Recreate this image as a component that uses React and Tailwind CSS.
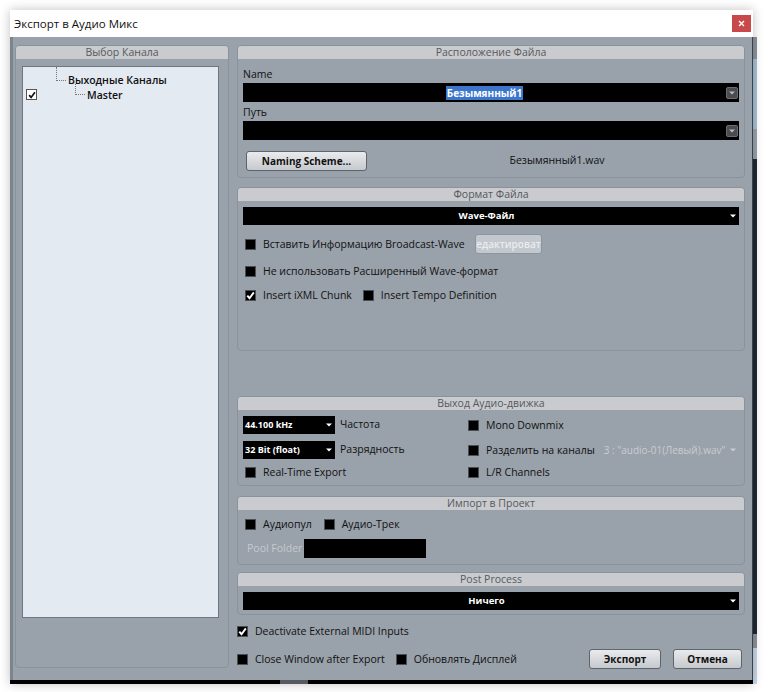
import React from "react";

function Check({ checked }) {
  return (
    <div className="w-[11px] h-[11px] bg-black border border-[#4a4f55] flex items-center justify-center shrink-0">
      {checked && (
        <svg width="9" height="9" viewBox="0 0 9 9">
          <path d="M1.3 4.6 L3.5 7.2 L7.8 1.4" stroke="white" strokeWidth="1.9" fill="none" />
        </svg>
      )}
    </div>
  );
}

function Row({ checked, children, className = "" }) {
  return (
    <div className={`flex items-center h-[16px] gap-[7px] shrink-0 ${className}`}>
      <Check checked={checked} />
      <span className="text-[10.5px] leading-[16px] text-[#111] whitespace-nowrap">{children}</span>
    </div>
  );
}

function Panel({ title, className = "", children }) {
  return (
    <div className={`rounded-[4px] border border-[#8a929b] bg-[#99a1aa] flex flex-col ${className}`}>
      <div className="h-[13px] bg-[#c9cbce] rounded-t-[3px] text-[10.5px] leading-[13px] text-center text-[#555a60] shrink-0">
        {title}
      </div>
      {children}
    </div>
  );
}

function Arrow({ color = "#ffffff" }) {
  return (
    <svg width="6" height="4" viewBox="0 0 6 4">
      <path d="M0 0.5 L6 0.5 L3 3.5 Z" fill={color} />
    </svg>
  );
}

function DropBox() {
  return (
    <div className="w-[12px] h-[12px] bg-[#4a4c50] rounded-[2px] border border-[#6a6d72] flex items-center justify-center">
      <Arrow color="#b8bcc2" />
    </div>
  );
}

function Btn({ children, className = "" }) {
  return (
    <div
      className={`h-[20px] rounded-[3px] border border-[#5e646b] bg-gradient-to-b from-[#e9ebed] to-[#c6c9cd] flex items-center justify-center text-[10px] font-bold text-[#111] shrink-0 ${className}`}
    >
      {children}
    </div>
  );
}

export default function App() {
  return (
    <div className="w-[768px] h-[692px] bg-white relative overflow-hidden font-['Open_Sans','Noto_Sans',sans-serif]">
      {/* background window glimpse */}
      <div className="absolute left-[753px] top-[37px] w-[4px] h-[647px] bg-[#1f2a38] flex flex-col">
        <div className="h-[22px] bg-[#8c949d]" />
        <div className="h-[70px] bg-[#a8c1d8]" />
        <div className="h-[30px] bg-[#9aa3ad]" />
        <div className="flex-1" />
        <div className="h-[14px] bg-[#8c949d]" />
        <div className="h-[36px] bg-[#c8d8e8]" />
      </div>

      <div className="absolute left-[10px] top-[10px] w-[743px] shadow-[0_0_10px_rgba(0,0,0,0.25)]">
        {/* title bar */}
        <div className="h-[27px] bg-white flex items-center pl-[4px] pr-[2px]">
          <span className="text-[11.5px] text-[#111]">Экспорт в Аудио Микс</span>
          <div className="ml-auto w-[19px] h-[17px] bg-[#c9484a] flex items-center justify-center">
            <svg width="7" height="7" viewBox="0 0 7 7">
              <path d="M1 1 L6 6 M6 1 L1 6" stroke="white" strokeWidth="1.4" />
            </svg>
          </div>
        </div>

        {/* body */}
        <div className="h-[643px] bg-[#99a1aa] border-l-[3px] border-l-[#7c848e] border-r border-r-[#3a4048] flex pl-[2px]">
          {/* left panel */}
          <Panel title="Выбор Канала" className="mt-[8px] w-[214px] h-[623px] shrink-0">
            <div className="mt-[7px] ml-[6px] w-[197px] h-[552px] bg-[#e4eaf2] border border-[#6e767f] relative">
              <div className="absolute left-[33px] top-[0px] w-[10px] h-[14px] border-l border-b border-dotted border-[#777]" />
              <div className="absolute left-[45px] top-[6px] text-[10.5px] font-semibold text-[#111] leading-[14px]">
                Выходные Каналы
              </div>
              <div className="absolute left-[52px] top-[17px] w-[10px] h-[11px] border-l border-b border-dotted border-[#777]" />
              <div className="absolute left-[64px] top-[21px] text-[10.5px] font-semibold text-[#111] leading-[14px]">
                Master
              </div>
              <div className="absolute left-[3px] top-[22px] w-[11px] h-[11px] bg-white border border-[#555] flex items-center justify-center">
                <svg width="8" height="8" viewBox="0 0 9 9">
                  <path d="M1.3 4.6 L3.5 7.2 L7.8 1.4" stroke="#111" strokeWidth="1.9" fill="none" />
                </svg>
              </div>
            </div>
          </Panel>

          {/* right column */}
          <div className="ml-[8px] w-[508px] pt-[8px] flex flex-col shrink-0">
            <Panel title="Расположение Файла" className="h-[133px]">
              <div className="px-[5px] flex flex-col">
                <div className="mt-[7px] h-[16px] leading-[16px] text-[10.5px] text-[#111]">Name</div>
                <div className="mt-[1px] h-[19px] bg-black flex items-center relative">
                  <div className="flex-1 flex justify-center">
                    <span className="bg-[#3b76cc] text-white text-[10px] font-bold leading-[14px] px-[1px]">
                      Безымянный1
                    </span>
                  </div>
                  <div className="mr-[1px]">
                    <DropBox />
                  </div>
                </div>
                <div className="mt-[2px] h-[16px] leading-[16px] text-[10.5px] text-[#111]">Путь</div>
                <div className="mt-[1px] h-[19px] bg-black flex items-center justify-end">
                  <div className="mr-[1px]">
                    <DropBox />
                  </div>
                </div>
                <div className="mt-[11px] flex items-center">
                  <Btn className="ml-[3px] w-[121px]">Naming Scheme...</Btn>
                  <div className="flex-1 text-center text-[10.5px] text-[#111] pl-[8px]">Безымянный1.wav</div>
                </div>
              </div>
            </Panel>

            <Panel title="Формат Файла" className="mt-[9px] h-[164px]">
              <div className="px-[5px] flex flex-col">
                <div className="mt-[6px] h-[18px] bg-black flex items-center">
                  <div className="flex-1 text-center text-white text-[9.5px] font-bold">Wave-Файл</div>
                  <div className="mr-[3px] flex">
                    <Arrow />
                  </div>
                </div>
                <div className="mt-[9px] h-[20px] flex items-center pl-[2px]">
                  <div className="w-[230px] shrink-0">
                    <Row>Вставить Информацию Broadcast-Wave</Row>
                  </div>
                  <div className="w-[67px] h-[20px] rounded-[3px] border border-[#8e959d] bg-[#c3c8ce] overflow-hidden flex justify-center items-center shrink-0">
                    <span className="text-[10px] font-semibold text-[#e9ecef] whitespace-nowrap">Редактировать</span>
                  </div>
                </div>
                <Row className="mt-[9px] pl-[2px]">Не использовать Расширенный Wave-формат</Row>
                <div className="mt-[8px] flex items-center pl-[2px]">
                  <Row checked>Insert iXML Chunk</Row>
                  <Row className="ml-[11px]">Insert Tempo Definition</Row>
                </div>
              </div>
            </Panel>

            <Panel title="Выход Аудио-движка" className="mt-[45px] h-[90px]">
              <div className="px-[5px] flex flex-col">
                <div className="mt-[6px] h-[18px] flex items-center">
                  <div className="w-[225px] shrink-0 flex items-center">
                    <div className="w-[92px] h-[18px] bg-black flex items-center pl-[2px] pr-[3px]">
                      <span className="flex-1 text-white text-[9px] font-bold">44.100 kHz</span>
                      <Arrow />
                    </div>
                    <span className="ml-[5px] text-[10.5px] text-[#111]">Частота</span>
                  </div>
                  <Row>Mono Downmix</Row>
                </div>
                <div className="mt-[7px] h-[18px] flex items-center">
                  <div className="w-[225px] shrink-0 flex items-center">
                    <div className="w-[92px] h-[18px] bg-black flex items-center pl-[2px] pr-[3px]">
                      <span className="flex-1 text-white text-[9px] font-bold">32 Bit (float)</span>
                      <Arrow />
                    </div>
                    <span className="ml-[5px] text-[10.5px] text-[#111]">Разрядность</span>
                  </div>
                  <Row>Разделить на каналы</Row>
                  <span className="ml-[9px] text-[10px] text-[#c9cdd2] whitespace-nowrap">3 : "audio-01(Левый).wav"</span>
                  <div className="ml-[4px] flex">
                    <Arrow color="#c9cdd2" />
                  </div>
                </div>
                <div className="mt-[5px] h-[16px] flex items-center">
                  <div className="w-[225px] shrink-0 pl-[2px]">
                    <Row>Real-Time Export</Row>
                  </div>
                  <Row>L/R Channels</Row>
                </div>
              </div>
            </Panel>

            <Panel title="Импорт в Проект" className="mt-[10px] h-[69px]">
              <div className="px-[5px] flex flex-col">
                <div className="mt-[6px] flex items-center pl-[2px]">
                  <Row>Аудиопул</Row>
                  <Row className="ml-[12px]">Аудио-Трек</Row>
                </div>
                <div className="mt-[7px] h-[19px] flex items-center">
                  <span className="ml-[4px] text-[10.5px] text-[#c5c9ce]">Pool Folder</span>
                  <div className="ml-[2px] w-[122px] h-[19px] bg-black" />
                </div>
              </div>
            </Panel>

            <Panel title="Post Process" className="mt-[7px] h-[43px]">
              <div className="px-[5px] flex flex-col">
                <div className="mt-[6px] h-[18px] bg-black flex items-center">
                  <div className="flex-1 text-center text-white text-[9.5px] font-bold">Ничего</div>
                  <div className="mr-[3px] flex">
                    <Arrow />
                  </div>
                </div>
              </div>
            </Panel>

            <Row checked className="mt-[8px]">Deactivate External MIDI Inputs</Row>

            <div className="mt-[10px] h-[20px] flex items-center">
              <Row>Close Window after Export</Row>
              <Row className="ml-[11px]">Обновлять Дисплей</Row>
              <Btn className="ml-auto w-[72px]">Экспорт</Btn>
              <Btn className="ml-[12px] mr-[3px] w-[69px]">Отмена</Btn>
            </div>
          </div>
        </div>

        {/* bottom black strip */}
        <div className="h-[4px] bg-black flex">
          <div className="ml-[270px] w-[28px] bg-[#555a60]" />
        </div>
      </div>
    </div>
  );
}
